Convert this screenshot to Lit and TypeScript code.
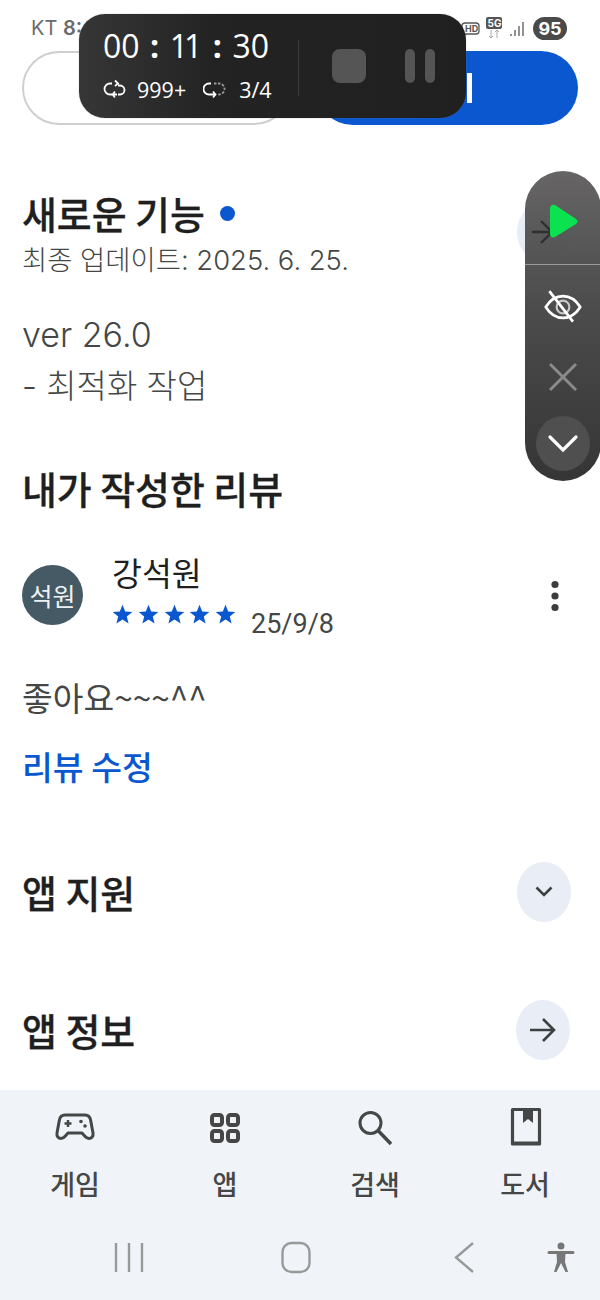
import { LitElement, html, css, svg } from "lit";
import { customElement } from "lit/decorators.js";

const star = svg`<path d="M10.5 0.8l2.7 6.6 7.1.5-5.5 4.6 1.8 6.9-6.1-3.8-6.1 3.8 1.8-6.9L.7 7.9l7.1-.5z" fill="#0b57d0"/>`;

@customElement("app-root")
export class AppRoot extends LitElement {
  static styles = css`
    :host { display: block; width: 600px; height: 1300px; position: relative; overflow: hidden; background: #fff;
      font-family: "Noto Sans CJK KR", "Noto Sans", sans-serif; color: #1f1f1f; }
    .page { display: flex; flex-direction: column; height: 1300px; }
    .content { flex: 1; display: flex; flex-direction: column; padding: 0 22px; min-height: 0; }
    .status { height: 51px; flex: none; display: flex; justify-content: space-between; padding: 15px 33px 0 9px; box-sizing: border-box; margin: 0 -22px 0 0; font-family: Inter, "Noto Sans", sans-serif; color: #6b6b6b; font-size: 20px; line-height: 27px; }
    .status b { font-weight: 600; }
    .status-r { display: flex; align-items: flex-start; gap: 7px; margin-top: 2px; }
    .batt { width: 34px; height: 23px; border-radius: 12px; background: #4a4a4a; color: #fff; font-size: 18px; line-height: 23px; font-weight: 700; text-align: center; font-family: Inter, sans-serif; }
    .btns { display: flex; gap: 25px; height: 74px; width: 556px; flex: none; }
    .btn-o { width: 269px; box-sizing: border-box; border: 2px solid #cfcfcf; border-radius: 37px; background: #fff; }
    .btn-f { flex: 1; border-radius: 37px; background: #0b57d0; display: flex; align-items: center; justify-content: flex-end; padding-right: 106px; }
    .btn-f i { display: block; width: 5px; height: 30px; background: #fff; }
    .h1 { font-size: 37.900px; line-height: 48px; font-weight: 500; margin: 0; color: #1f1f1f; -webkit-text-stroke: 0.3px #1f1f1f; }
    .h-row { display: flex; align-items: center; gap: 15px; margin-top: 64px; }
    .dot { width: 15px; height: 15px; border-radius: 50%; background: #0b57d0; }
    .updated { font-size: 27.400px; line-height: 36px; color: #444746; margin-top: 5px; font-family: Inter, "Noto Sans CJK KR", sans-serif; font-weight: 300; }
    .ver { font-size: 34px; line-height: 51px; color: #444746; margin-top: 31px; font-family: Inter, "Noto Sans CJK KR", sans-serif; font-weight: 300; }
    .ver-2 { font-size: 33px; }
    .rev-title { margin-top: 52px; }
    .reviewer { display: flex; align-items: center; margin-top: 38px; height: 84px; }
    .avatar { width: 61px; height: 60px; border-radius: 50%; background: #455a64; color: #eef1f2; font-size: 25px; text-align: center; line-height: 60px; flex: none; margin-top: 6px; }
    .who { margin-left: 29px; flex: 1; margin-top: -4px; }
    .name { font-size: 32.500px; line-height: 42px; color: #1f1f1f; }
    .stars-row { display: flex; align-items: center; height: 30px; margin-top: 7px; }
    .stars { display: flex; gap: 5px; width: 123px; }
    .stars svg { width: 21px; height: 21px; flex: none; margin-right: -0.2px; }
    .date { font-size: 27px; line-height: 34px; color: #444746; margin-left: 16px; margin-top: 18px; font-family: Roboto, sans-serif; }
    .more { flex: none; margin-right: 18px; margin-top: 7px; }
    .comment { font-size: 33.400px; line-height: 46px; color: #444746; margin-top: 40px; }
    .edit { font-size: 33.500px; line-height: 46px; color: #0b57d0; font-weight: 500; margin-top: 23px; }
    .row { display: flex; align-items: center; justify-content: space-between; height: 60px; padding-right: 7px; }
    .row-1 { margin-top: 73px; }
    .row-2 { margin-top: 78px; padding-right: 8px; }
    .circle { width: 54px; height: 60px; border-radius: 50%; background: #e9eef6; display: flex; align-items: center; justify-content: center; }
    .bottom { flex: none; height: 210px; background: #f0f4f9; display: flex; flex-direction: column; }
    .tabs { display: grid; grid-template-columns: repeat(4, 150px); padding-top: 17px; height: 125px; box-sizing: border-box; }
    .tab { display: flex; flex-direction: column; align-items: center; color: #444746; font-size: 27px; line-height: 36px; font-weight: 500; }
    .tab svg { height: 44px; width: 44px; margin-bottom: 15px; overflow: visible; }
    .nav { position: relative; flex: 1; }
    .nav svg { display: block; }
    .timer { position: absolute; left: 79px; top: 14px; width: 387px; height: 104px; border-radius: 26px; background: linear-gradient(90deg, #363636 0, #232323 35%, #202020 100%); box-shadow: 0 0 1px #777; display: flex; color: #fff; }
    .t-left { width: 219px; box-sizing: border-box; padding: 12px 0 0 24px; font-family: "Open Sans", sans-serif; }
    .time { display: flex; font-size: 32px; line-height: 40px; font-weight: 500; width: 166px; justify-content: space-between; }
    .time b { font-weight: 700; }
    .time .ones { letter-spacing: -4px; padding-right: 4px; }
    .counts { display: flex; align-items: center; margin-top: 11px; font-size: 21.500px; line-height: 26px; font-weight: 500; }
    .counts svg { flex: none; }
    .sep { width: 1px; height: 56px; background: #3d3d3d; margin-top: 26px; }
    .t-right { display: flex; align-items: center; padding-left: 33px; gap: 39px; margin-top: -1px; }
    .square { width: 34px; height: 34px; border-radius: 8px; background: #555; }
    .pause { display: flex; gap: 10px; }
    .pause i { display: block; width: 10px; height: 34px; border-radius: 5px; background: #555; }
    .side { position: absolute; left: 525px; top: 171px; width: 76px; height: 310px; border-radius: 38px; background: linear-gradient(180deg, rgba(96,94,94,.96) 0, rgba(72,72,72,.98) 45%, #353535 100%); overflow: hidden; display: flex; flex-direction: column; }
    .bgc { position: absolute; left: 517px; top: 202px; width: 54px; height: 60px; border-radius: 50%; background: #e9eef6; }
    .s-top { height: 93px; border-bottom: 1px solid #9a9a9a; flex: none; }
    .s-mid { flex: 1; display: flex; flex-direction: column; align-items: center; }
    .collapse { position: absolute; left: 536px; top: 416px; width: 54px; height: 55px; border-radius: 50%; background: #4f4f4f; display: flex; align-items: center; justify-content: center; }
    .arrow-over { position: absolute; left: 530px; top: 203px; }
  `;

  render() {
    return html`
      <div class="page">
        <div class="content">
          <div class="status">
            <span>KT <b>8:</b></span>
            <span class="status-r">
              <svg width="70" height="24" viewBox="0 0 70 24" style="margin-top:-1px">
                <rect x="6" y="7" width="17" height="11" rx="3" fill="none" stroke="#555" stroke-width="1.300"/>
                <text x="9" y="16" font-size="9" font-weight="700" fill="#555" font-family="Inter">HD</text>
                <rect x="30" y="1" width="16" height="12" rx="2" fill="#555"/>
                <text x="31.500" y="11" font-size="10" font-weight="700" fill="#fff" font-family="Inter">5G</text>
                <path d="M35 14v8M33 20l2 2 2-2M41 22v-8M39 16l2-2 2 2" stroke="#aaa" stroke-width="1" fill="none"/>
                <path d="M55 18v2M59 14v6M63 10v10M67 6v14" stroke="#777" stroke-width="1.600"/>
              </svg>
              <span class="batt">95</span>
            </span>
          </div>
          <div class="btns"><div class="btn-o"></div><div class="btn-f"><i></i></div></div>
          <div class="h-row"><h2 class="h1">새로운 기능</h2><span class="dot"></span></div>
          <div class="updated">최종 업데이트: 2025. 6. 25.</div>
          <div class="ver">ver 26.0<br/><span class="ver-2">- 최적화 작업</span></div>
          <h2 class="h1 rev-title">내가 작성한 리뷰</h2>
          <div class="reviewer">
            <div class="avatar">석원</div>
            <div class="who">
              <div class="name">강석원</div>
              <div class="stars-row">
                <div class="stars">${[0,1,2,3,4].map(() => html`<svg viewBox="0 0 21 21">${star}</svg>`)}</div>
                <div class="date">25/9/8</div>
              </div>
            </div>
            <svg class="more" width="10" height="32" viewBox="0 0 10 32"><circle cx="5" cy="4.500" r="3.600" fill="#3c3c3c"/><circle cx="5" cy="16" r="3.600" fill="#3c3c3c"/><circle cx="5" cy="27.500" r="3.600" fill="#3c3c3c"/></svg>
          </div>
          <div class="comment">좋아요~~~^^</div>
          <div class="edit">리뷰 수정</div>
          <div class="row row-1"><h2 class="h1">앱 지원</h2>
            <div class="circle"><svg width="20" height="14" viewBox="0 0 20 14"><path d="M2.500 2.500L10 10l7.500-7.500" fill="none" stroke="#3c4043" stroke-width="2.600"/></svg></div></div>
          <div class="row row-2"><h2 class="h1">앱 정보</h2>
            <div class="circle"><svg width="28" height="26" viewBox="0 0 28 26"><path d="M1 13h24M14 2l11 11-11 11" fill="none" stroke="#3c4043" stroke-width="2.600"/></svg></div></div>
        </div>
        <div class="bottom">
          <div class="tabs">
            <div class="tab">
              <svg viewBox="0 -1 44 44"><path d="M12 7h20c3 0 5 2 5.600 5l2.400 13c.6 3.500-1.500 5.500-4 5.500-1.800 0-2.900-.9-4.100-2.300L29 25H15l-2.900 3.200C10.900 29.600 9.800 30.500 8 30.500c-2.500 0-4.600-2-4-5.500l2.400-13C7 9 9 7 12 7z" fill="none" stroke="#444746" stroke-width="3" stroke-linejoin="round"/><path d="M15 12v7M11.500 15.500h7" stroke="#444746" stroke-width="2.500"/><circle cx="28" cy="13.500" r="1.800" fill="#444746"/><circle cx="32" cy="18" r="1.800" fill="#444746"/></svg>
              <span>게임</span>
            </div>
            <div class="tab">
              <svg viewBox="0 -3 44 44"><g fill="none" stroke="#444746" stroke-width="4"><rect x="9" y="5" width="10" height="10" rx="2.500"/><rect x="25" y="5" width="10" height="10" rx="2.500"/><rect x="9" y="21" width="10" height="10" rx="2.500"/><rect x="25" y="21" width="10" height="10" rx="2.500"/></g></svg>
              <span>앱</span>
            </div>
            <div class="tab">
              <svg viewBox="1 -1.500 44 44"><circle cx="18.500" cy="14.500" r="10.500" fill="none" stroke="#444746" stroke-width="3"/><path d="M26 22l13 13.500" stroke="#444746" stroke-width="3.500"/></svg>
              <span>검색</span>
            </div>
            <div class="tab">
              <svg viewBox="-1 0 44 44"><path d="M8.500 2.500h27v34.500h-27z" fill="none" stroke="#444746" stroke-width="3.200" stroke-linejoin="round"/><path d="M19 3h10v13l-5-4-5 4z" fill="#444746"/><path d="M8 34.500h28v3H8z" fill="#444746"/></svg>
              <span>도서</span>
            </div>
          </div>
          <div class="nav">
            <svg width="600" height="85" viewBox="0 0 600 85">
              <path d="M116 28v29M129 28v29M142 28v29" stroke="#999" stroke-width="2.400" fill="none"/>
              <rect x="282.500" y="28" width="27" height="29" rx="9" fill="none" stroke="#999" stroke-width="2.400"/>
              <path d="M473 28L456 42.500 473 57" fill="none" stroke="#999" stroke-width="2.400"/>
              <circle cx="561" cy="31" r="3.500" fill="#777"/>
              <path d="M549 37.500l24 0" stroke="#777" stroke-width="3" stroke-linecap="round"/>
              <path d="M556.500 38h9l-.5 9 3 10h-2.500l-4.500-9-4.500 9H554l3-10z" fill="#777"/>
            </svg>
          </div>
        </div>
      </div>

      <div class="bgc"></div>
      <div class="side">
        <div class="s-top"></div>
        <div class="s-mid">
          <svg width="40" height="36" viewBox="0 0 44 36" style="margin-top:24px"><path d="M3 18c5-8 11-12 19-12s14 4 19 12c-5 8-11 12-19 12S8 26 3 18z" fill="none" stroke="#fff" stroke-width="3" stroke-linejoin="round"/><circle cx="22" cy="18" r="7" fill="none" stroke="#c8c8c8" stroke-width="2.400"/><path d="M7 0.500L33 34" stroke="#fff" stroke-width="3"/></svg>
          <svg width="30" height="30" viewBox="0 0 30 30" style="margin-top:37px"><path d="M2 2l26 26M28 2L2 28" stroke="#8a8a8a" stroke-width="3"/></svg>
        </div>
      </div>
      <svg class="arrow-over" width="60" height="56" viewBox="0 0 60 56">
        <path d="M2 29h20M11 18l11 11-11 11" fill="none" stroke="#2f2f2f" stroke-width="2.400"/>
        <path d="M20 5c0-3 3-4 5-3l21 14c2 1.500 2 3.500 0 5L25 34c-2 1.500-5 0-5-3z" fill="#0be24f"/>
      </svg>
      <div class="collapse"><svg width="32" height="20" viewBox="0 0 32 20"><path d="M3 3l13 13L29 3" fill="none" stroke="#fff" stroke-width="3.200" stroke-linecap="round"/></svg></div>

      <div class="timer">
        <div class="t-left">
          <div class="time"><span>00</span><b>:</b><span class="ones">11</span><b>:</b><span>30</span></div>
          <div class="counts">
            <svg width="24" height="22" viewBox="0 0 22 22" style="margin-right:10px"><path d="M8 4.500h-2a5 5 0 0 0 0 11h7M14 6.500h2a4.500 4.500 0 0 1 0 9h-2M11 1.500l3 3-3 2.500M11 12.500l-2.500 3 2.500 3" fill="none" stroke="#fff" stroke-width="1.800"/></svg>
            <span>999+</span>
            <svg width="26" height="22" viewBox="0 0 26 22" style="margin:0 10px 0 17px"><path d="M8 4.500h-2a5 5 0 0 0 0 11h6M10 12.500l2.500 3-2.500 3" fill="none" stroke="#fff" stroke-width="1.800"/><path d="M11 4.500h5a5.500 5.500 0 0 1 0 11h-1" fill="none" stroke="#999" stroke-width="1.800" stroke-dasharray="2.500 1.500"/></svg>
            <span>3/4</span>
          </div>
        </div>
        <div class="sep"></div>
        <div class="t-right"><div class="square"></div><div class="pause"><i></i><i></i></div></div>
      </div>
    `;
  }
}
